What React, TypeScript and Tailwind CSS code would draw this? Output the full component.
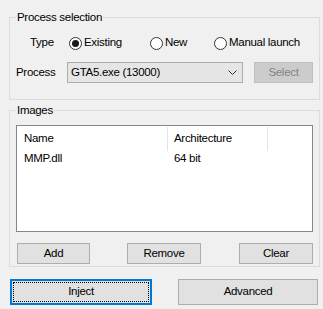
import React from "react";

const font = { fontFamily: '"Liberation Sans", Arial, sans-serif' };

const Radio = ({ label, checked, width }: { label: string; checked?: boolean; width: string }) => (
  <div className={`flex items-center ${width}`}>
    <span className="flex h-[13px] w-[13px] items-center justify-center rounded-full border border-[#333333] bg-white">
      {checked && <span className="h-[7px] w-[7px] rounded-full bg-[#1a1a1a]" />}
    </span>
    <span className="ml-[2px]">{label}</span>
  </div>
);

const Button = ({ label, width }: { label: string; width: string }) => (
  <button className={`flex h-[21px] ${width} items-center justify-center border border-[#adadad] bg-[#e1e1e1]`}>
    {label}
  </button>
);

const App: React.FC = () => {
  return (
    <div
      className="h-[309px] w-[323px] overflow-hidden bg-[#f0f0f0] pt-[9px] text-[11.5px] tracking-[-0.3px] text-black"
      style={font}
    >
      <fieldset className="ml-[9px] w-[311px] border border-[#dcdcdc] px-[6px] pb-[16px]">
        <legend className="px-[1px] leading-[16px]">Process selection</legend>
        <div className="-ml-[6px] mt-[8px] flex h-[20px] items-center pl-[20px]">
          <span className="w-[39px]">Type</span>
          <Radio label="Existing" checked width="w-[81px]" />
          <Radio label="New" width="w-[64px]" />
          <Radio label="Manual launch" width="w-[90px]" />
        </div>
        <div className="-ml-[6px] mt-[9px] flex h-[21px] items-center pl-[6px]">
          <span className="w-[51px]">Process</span>
          <div className="flex h-[21px] w-[176px] items-center justify-between border border-[#adadad] bg-[#e5e5e5] pl-[3px] pr-[5px]">
            <span>GTA5.exe (13000)</span>
            <svg width="9" height="5" viewBox="0 0 9 5" fill="none">
              <path d="M0.5 0.5 L4.5 4.5 L8.5 0.5" stroke="#333" strokeWidth="1" />
            </svg>
          </div>
          <button className="ml-[11px] flex h-[21px] w-[59px] items-center justify-center border border-[#bfbfbf] bg-[#cccccc] text-[#838383]">
            Select
          </button>
        </div>
      </fieldset>

      <fieldset className="ml-[9px] mt-[2px] w-[311px] border border-[#dcdcdc] px-[6px] pb-[2px]">
        <legend className="px-[1px] leading-[16px]">Images</legend>
        <div className="mt-[7px] h-[107px] w-[297px] border border-[#828790] bg-white">
          <div className="flex h-[26px] items-start">
            <div className="flex h-full w-[150px] items-center pl-[7px]">Name</div>
            <div className="mt-[1px] h-[24px] w-px bg-[#e5e5e5]" />
            <div className="flex h-full w-[99px] items-center pl-[6px]">Architecture</div>
            <div className="mt-[1px] h-[24px] w-px bg-[#e5e5e5]" />
          </div>
          <div className="flex h-[14px] items-center">
            <div className="w-[151px] pl-[7px]">MMP.dll</div>
            <div className="pl-[6px]">64 bit</div>
          </div>
        </div>
        <div className="mt-[11px] flex items-center">
          <div className="ml-[1px]">
            <Button label="Add" width="w-[73px]" />
          </div>
          <div className="ml-[37px]">
            <Button label="Remove" width="w-[74px]" />
          </div>
          <div className="ml-[38px]">
            <Button label="Clear" width="w-[74px]" />
          </div>
        </div>
      </fieldset>

      <div className="ml-[10px] mt-[12px] flex">
        <button className="h-[26px] w-[142px] border-2 border-[#0078d7] bg-[#e1e1e1] p-[1px]">
          <div className="flex h-full w-full items-center justify-center border border-dotted border-black">
            Inject
          </div>
        </button>
        <button className="ml-[26px] flex h-[26px] w-[140px] items-center justify-center border border-[#adadad] bg-[#e1e1e1]">
          Advanced
        </button>
      </div>
    </div>
  );
};

export default App;
